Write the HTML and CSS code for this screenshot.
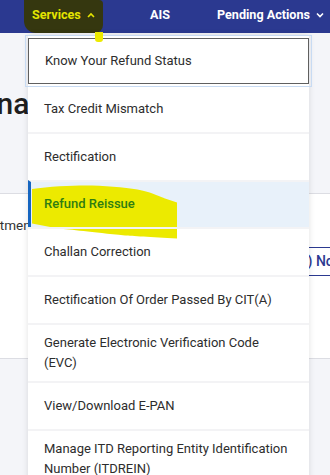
FILE: index.html
```html
<!DOCTYPE html>
<html lang="en">
<head>
<meta charset="utf-8">
<title>Services menu</title>
<link rel="stylesheet" href="styles.css">
</head>
<body>
<header class="topnav">
  <span class="mark-olive"></span>
  <nav class="nav">
    <a class="nav-item nav-active">Services <svg class="caret" viewBox="0 0 8 6" width="8" height="6"><path d="M1 5 L4 2 L7 5" fill="none" stroke="currentColor" stroke-width="1.6"/></svg></a>
    <a class="nav-item">AIS</a>
    <a class="nav-item">Pending Actions <svg class="caret" viewBox="0 0 8 6" width="8" height="6"><path d="M1 1.5 L4 4.5 L7 1.5" fill="none" stroke="currentColor" stroke-width="1.6"/></svg></a>
  </nav>
</header>
<main class="page">
  <section class="hero">
    <h1 class="hero-title">Webinar</h1>
  </section>
  <section class="panel">
    <p class="panel-text">Department</p>
    <div class="panel-tabs"><span class="tab">(3) Notices</span></div>
  </section>
  <section class="lower"></section>
</main>

<span class="mark-tail"></span>
<ul class="menu">
  <li class="menu-item menu-focus">Know Your Refund Status</li>
  <li class="menu-item">Tax Credit Mismatch</li>
  <li class="menu-item">Rectification</li>
  <li class="menu-item menu-active">
    <svg class="mark-blob" viewBox="0 0 148 60" width="148" height="60"><path d="M1 7 C20 4 50 3 61 3.5 C80 4 100 6 111 8.5 C122 11 130 15 134 16.5 L146 20.5 L146 56.5 C120 55 100 54 94 53.5 C60 50 40 47.5 27 46.5 L1 41.5 Z" fill="#ecea00"/></svg>
    <span class="menu-label">Refund Reissue</span>
  </li>
  <li class="menu-item">Challan Correction</li>
  <li class="menu-item">Rectification Of Order Passed By CIT(A)</li>
  <li class="menu-item">Generate Electronic Verification Code (EVC)</li>
  <li class="menu-item">View/Download E-PAN</li>
  <li class="menu-item">Manage ITD Reporting Entity Identification Number (ITDREIN)</li>
</ul>
</body>
</html>
```
FILE: styles.css
```css
* { box-sizing: border-box; }
html, body { margin: 0; padding: 0; }
body {
  width: 330px;
  height: 475px;
  overflow: hidden;
  background: #f4f5f9;
  font-family: Roboto, "Liberation Sans", sans-serif;
  position: relative;
}
.topnav {
  height: 33px;
  background: #2b3990;
  position: relative;
}
.mark-olive {
  position: absolute;
  left: 24px;
  top: 0;
  width: 79px;
  height: 33px;
  background: #35370f;
  border-radius: 0 4px 8px 12px;
}
.nav {
  position: relative;
  display: grid;
  grid-template-columns: 118px 67px auto;
  align-items: center;
  height: 33px;
  padding: 0 0 4px 32px;
}
.nav-item {
  color: #ffffff;
  font-weight: 700;
  font-size: 12.6px;
  display: flex;
  align-items: center;
  gap: 6px;
  white-space: nowrap;
}
.nav-active { color: #e4e400; }
.caret { display: block; }
.page { display: flex; flex-direction: column; }
.hero {
  height: 160px;
  background: #f4f5f9;
  overflow: hidden;
  padding-top: 52px;
}
.hero-title {
  margin: 0 0 0 -70px;
  font-size: 30px;
  line-height: 38px;
  font-weight: 500;
  color: #1e1e1e;
  white-space: nowrap;
}
.panel {
  height: 166px;
  background: #ffffff;
  border-top: 1px solid #dcdde3;
  border-bottom: 1px solid #dcdde3;
  position: relative;
  display: flex;
  flex-direction: column;
}
.panel-text {
  margin: 23px 0 0 -36px;
  font-size: 13.5px;
  color: #333;
}
.panel-tabs {
  margin-top: 14px;
  display: flex;
  justify-content: flex-end;
  overflow: hidden;
}
.tab {
  display: block;
  margin-right: -44px;
  height: 29px;
  line-height: 27px;
  padding: 0 10px;
  border-top: 1.5px solid #2b3990;
  border-bottom: 1.5px solid #2b3990;
  color: #2b3990;
  font-size: 14px;
  font-weight: 500;
  white-space: nowrap;
}
.lower { flex: 1; background: #f4f5f9; }

.menu {
  position: absolute;
  left: 28px;
  top: 35px;
  width: 281px;
  margin: 0;
  padding: 3px 0 0;
  list-style: none;
  background: #ffffff;
  box-shadow: 0 0 6px rgba(0,0,0,0.12);
  z-index: 5;
}
.menu-item {
  position: relative;
  display: flex;
  align-items: center;
  min-height: 47.75px;
  padding: 8px 20px 8px 16px;
  font-size: 13px;
  line-height: 20px;
  color: #2d2d2d;
  border-top: 2px solid #f3f3f5;
}
.menu-focus {
  border: 1px solid #5f5f5f;
  outline: 1px solid #c8dbf3;
  outline-offset: 2px;
  min-height: 46px;
}
.menu-focus + .menu-item { border-top-color: #ffffff; }
.menu-active {
  background: #e8f1fa;
  border-left: 3px solid #1565c0;
  padding-left: 13px;
}
.mark-blob {
  position: absolute;
  left: 0;
  top: 0;
}
.menu-label {
  position: relative;
  color: #2f7d12;
  font-weight: 500;
}
.mark-tail {
  position: absolute;
  left: 95px;
  top: 32px;
  width: 8px;
  height: 10px;
  background: #ecea00;
  border-radius: 0 0 3px 3px;
  z-index: 6;
}
```
